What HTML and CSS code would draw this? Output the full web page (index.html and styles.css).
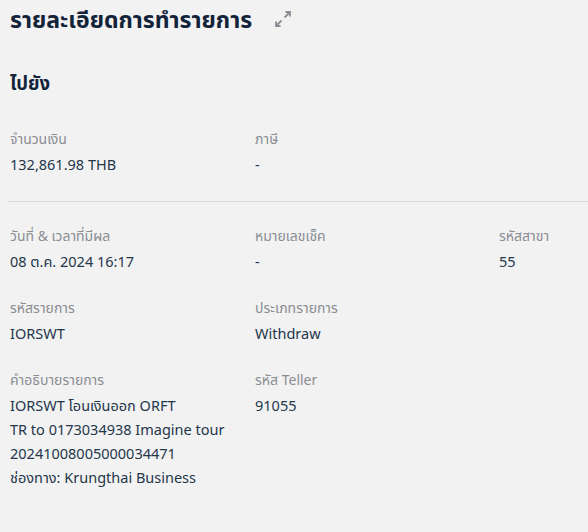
FILE: index.html
```html
<!DOCTYPE html>
<html lang="th">
<head>
<meta charset="utf-8">
<link rel="stylesheet" href="styles.css">
</head>
<body>
<div class="page">
  <div class="header">
    <h1 class="title">รายละเอียดการทำรายการ</h1>
    <svg class="expand" width="18" height="18" viewBox="0 0 18 18" fill="none" stroke="#8a8f96" stroke-width="1.8">
      <path d="M10.5 7.5 L16 2"/>
      <path d="M11.5 2 H16 V6.5" fill="none"/>
      <path d="M7.5 10.5 L2 16"/>
      <path d="M2 11.5 V16 H6.5" fill="none"/>
    </svg>
  </div>
  <h2 class="section">ไปยัง</h2>
  <div class="grid first">
    <div class="field"><div class="label">จำนวนเงิน</div><div class="value">132,861.98 THB</div></div>
    <div class="field"><div class="label">ภาษี</div><div class="value">-</div></div>
  </div>
  <hr class="divider">
  <div class="grid">
    <div class="field"><div class="label">วันที่ &amp; เวลาที่มีผล</div><div class="value">08 ต.ค. 2024 16:17</div></div>
    <div class="field"><div class="label">หมายเลขเช็ค</div><div class="value">-</div></div>
    <div class="field"><div class="label">รหัสสาขา</div><div class="value">55</div></div>
    <div class="field"><div class="label">รหัสรายการ</div><div class="value">IORSWT</div></div>
    <div class="field"><div class="label">ประเภทรายการ</div><div class="value">Withdraw</div></div>
    <div class="field empty"></div>
    <div class="field"><div class="label">คำอธิบายรายการ</div><div class="value">IORSWT โอนเงินออก ORFT<br>TR to 0173034938 Imagine tour<br>20241008005000034471<br>ช่องทาง: Krungthai Business</div></div>
    <div class="field"><div class="label">รหัส Teller</div><div class="value">91055</div></div>
  </div>
</div>
</body>
</html>
```
FILE: styles.css
```css
* { box-sizing: border-box; }
html, body { margin: 0; padding: 0; }
body {
  background: #f2f2f2;
  font-family: "Noto Sans", "Noto Sans Thai", "DejaVu Sans", sans-serif;
  color: #1d2b3c;
  width: 588px;
  height: 532px;
  overflow: hidden;
}
.page { padding: 0 0 0 10px; }
.header {
  display: flex;
  align-items: center;
  gap: 22px;
  height: 38px;
}
.title {
  margin: 0;
  font-size: 23px;
  font-weight: 700;
  color: #13243a;
  line-height: 36px;
}
.section {
  margin: 31px 0 0 0;
  font-size: 18.5px;
  font-weight: 700;
  color: #13243a;
  line-height: 28px;
}
.grid {
  display: grid;
  grid-template-columns: 245px 244px 1fr;
  row-gap: 24px;
}
.grid.first { margin-top: 31px; }
.label {
  font-size: 14px;
  line-height: 22px;
  color: #8a8d92;
}
.value {
  font-size: 14.5px;
  line-height: 24px;
  color: #24364b;
  margin-top: 2px;
}
.divider {
  border: 0;
  border-top: 1px solid #dcdcdc;
  margin: 25px 0 23px -2px;
}
```
